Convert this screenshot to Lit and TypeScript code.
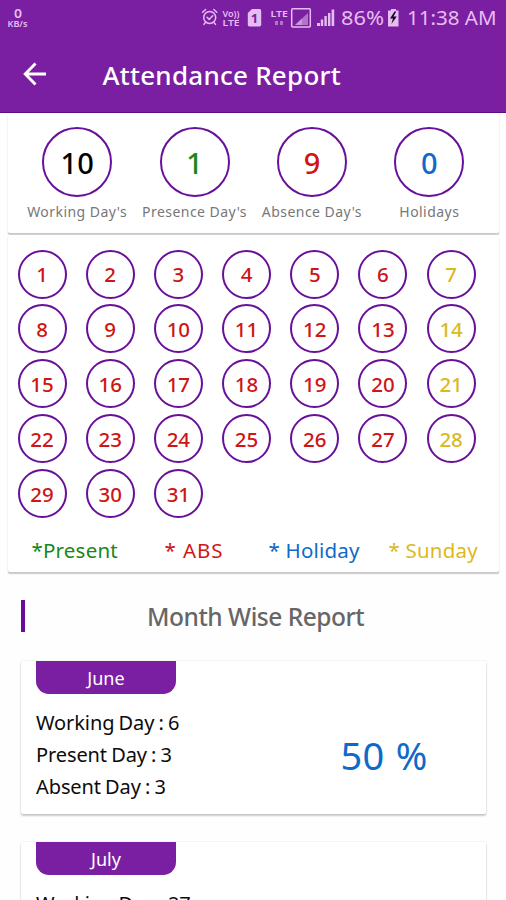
import { LitElement, html, css, svg } from "lit";
import { customElement, property } from "lit/decorators.js";

type DayKind = "present" | "absent" | "holiday" | "sunday";

@customElement("status-bar")
class StatusBar extends LitElement {
  static styles = css`
    :host { display: flex; height: 37px; }
    svg { display: block; width: 100%; height: 37px; }
    text { font-family: "Noto Sans", sans-serif; fill: #e6bdf2; }
    .clock { font-size: 19px; }
    .tiny { font-size: 9px; font-weight: 600; }
    .zero { font-size: 13px; font-weight: 600; }
    .line { fill: none; stroke: #e6bdf2; stroke-width: 1.5; stroke-linecap: round; }
    .fill { fill: #e6bdf2; }
    .dim { fill: #b273c9; }
    .sim { font-size: 13px; font-weight: 700; fill: #7b1fa2; }
    .bolt { fill: #1c0526; }
  `;
  render() {
    return html`<svg viewBox="0 0 506 37">
      ${svg`
      <text class="zero" x="14" y="18" textLength="8" lengthAdjust="spacingAndGlyphs">0</text>
      <text class="tiny" x="7.5" y="26.8" textLength="20" lengthAdjust="spacingAndGlyphs">KB/s</text>
      <circle class="line" cx="209.7" cy="17.4" r="6" />
      <path class="line" d="M207 17.2l2.2 2.2 3.5-3.6M202.6 12.3l3-2.8M216.8 12.3l-3-2.8M205.3 22.6l-1.4 1.8M214.1 22.6l1.4 1.8" />
      <text class="tiny" x="222.5" y="16.5" textLength="17" lengthAdjust="spacingAndGlyphs">Vo))</text>
      <text class="tiny" x="222.5" y="26" textLength="17" lengthAdjust="spacingAndGlyphs">LTE</text>
      <path class="fill" d="M252 9h7.500q1.700 0 1.700 1.700v14q0 1.700-1.700 1.700h-10q-1.700 0-1.700-1.700V13z" />
      <text class="sim" x="250.800" y="22.500">1</text>
      <text class="tiny" x="270.500" y="17.200" textLength="17.500" lengthAdjust="spacingAndGlyphs">LTE</text>
      <path class="dim" d="M275 21h3v4h-3zM280 21h3v4h-3z" />
      <rect class="line" x="291.700" y="8.700" width="18.600" height="18.300" rx="1" />
      <path class="dim" d="M295 25L308 13V25z" />
      <path class="fill" d="M295 25L302 18.600V25z" opacity="0.5" />
      <path class="fill" d="M317 26v-3h3v3zM320.800 26v-6.500h2.400V26zM324.400 26V16h2.400v10zM328 26V13h2.400v13zM331.600 26V9.500h2.600V26z" />
      <text class="clock" x="341" y="24.7" textLength="43" lengthAdjust="spacingAndGlyphs">86%</text>
      <path class="fill" d="M391 10.500V9h5v1.500h2.500v16h-10.500v-16z" />
      <path class="bolt" d="M394.500 11.500l-4.500 7h3l-1.600 5.500 5.400-7.500h-3.300l2.700-5z" />
      <text class="clock" x="407" y="24.7" textLength="89.5" lengthAdjust="spacingAndGlyphs">11:38 AM</text>
      `}
    </svg>`;
  }
}

@customElement("month-card")
class MonthCard extends LitElement {
  @property() month = "";
  @property({ type: Number }) working = 0;
  @property({ type: Number }) presentDays = 0;
  @property({ type: Number }) absentDays = 0;
  @property({ type: Number }) percent = 0;
  static styles = css`
    :host {
      display: flex;
      box-sizing: border-box;
      height: 153px;
      margin: 0 20px 28px 21px;
      padding: 0 15px;
      background: #fff;
      border-radius: 2px;
      box-shadow: 0 2px 2px rgba(0, 0, 0, 0.2), 0 0 2px rgba(0, 0, 0, 0.14);
    }
    .info { width: 261px; }
    .tab {
      width: 140px;
      height: 33px;
      margin-bottom: 13.3px;
      border-radius: 0 0 13px 13px;
      background: #7b1fa2;
      color: #fff;
      font-size: 18px;
      line-height: 34px;
      text-align: center;
    }
    .row {
      font-size: 20px;
      line-height: 31.700px;
      letter-spacing: -0.1px;
      word-spacing: -0.9px;
      color: #0c0c0c;
      white-space: nowrap;
    }
    .percent {
      flex: 1;
      text-align: center;
      color: #0f69c9;
      font-size: 38px;
      letter-spacing: 0.3px;
      word-spacing: 1px;
      line-height: 189px;
    }
  `;
  render() {
    return html`
      <div class="info">
        <div class="tab">${this.month}</div>
        <div class="row">Working Day : ${this.working}</div>
        <div class="row">Present Day : ${this.presentDays}</div>
        <div class="row">Absent Day : ${this.absentDays}</div>
      </div>
      <div class="percent">${this.percent} %</div>
    `;
  }
}

@customElement("app-root")
class AppRoot extends LitElement {
  static styles = css`
    :host {
      display: block;
      height: 900px;
      overflow: hidden;
      background: #fefefe;
      font-family: "Noto Sans", "Open Sans", sans-serif;
    }
    .top { height: 113px; background: #7b1fa2; box-shadow: inset 0 -1px #5e0b86; }
    .bar { display: flex; align-items: center; height: 75px; padding-left: 23px; }
    .back { width: 24px; height: 24px; margin-right: 55.5px; margin-bottom: 2px; }
    .title { color: #fff; font-size: 26px; line-height: 36px; font-weight: 500; letter-spacing: 0.25px; }
    .card {
      margin: 0 7px 0 8px;
      background: #fff;
      border-radius: 2px;
      box-shadow: 0 2px 1.5px -0.5px rgba(0, 0, 0, 0.22);
    }
    .summary { display: flex; height: 120px; box-sizing: border-box; padding: 14px 11px 0 10.500px; }
    .stat { flex: 1; display: flex; flex-direction: column; align-items: center; }
    .ring {
      box-sizing: border-box;
      display: grid;
      place-items: center;
      border: 2px solid #68109a;
      border-radius: 50%;
    }
    .big { width: 70px; height: 70px; font-size: 29px; line-height: 40px; font-weight: 500; padding-top: 1px; }
    .label { font-size: 14px; line-height: 20px; margin-top: 5px; color: #777; letter-spacing: 0.45px; white-space: nowrap; }
    .calendar { height: 337px; margin-top: 2px; padding-top: 14.500px; box-sizing: border-box; }
    .grid { display: grid; grid-template-columns: repeat(7, 68.2px); grid-auto-rows: 54.9px; }
    .day { width: 49px; height: 49px; margin-left: 9.5px; font-size: 20.5px; line-height: 28px; font-weight: 500; }
    .present { color: #15891c; }
    .absent { color: #cf1515; }
    .holiday { color: #0f69c9; }
    .sunday { color: #dcb91c; }
    .neutral { color: #000; }
    .legend {
      display: grid;
      grid-template-columns: 133px 104px 120px 1fr;
      padding: 12.500px 0 0 23.5px;
      font-size: 20.5px;
      line-height: 29px;
      letter-spacing: 0.2px;
      white-space: nowrap;
    }
    .legend .absent { letter-spacing: 0.9px; }
    .heading { display: flex; align-items: center; height: 32px; margin: 28px 0 29px 21px; }
    .mark { width: 4px; height: 32px; background: #6a0c9a; margin-right: 122px; }
    .heading-text {
      color: #666;
      font-size: 24.5px;
      line-height: 34px;
      padding-top: 2px;
      font-weight: 500;
      letter-spacing: -0.48px;
      white-space: nowrap;
    }
  `;

  private stats: { value: number; label: string; tone: string }[] = [
    { value: 10, label: "Working Day's", tone: "neutral" },
    { value: 1, label: "Presence Day's", tone: "present" },
    { value: 9, label: "Absence Day's", tone: "absent" },
    { value: 0, label: "Holidays", tone: "holiday" },
  ];

  private kindOf(day: number): DayKind {
    return day % 7 === 0 ? "sunday" : "absent";
  }

  render() {
    const days = Array.from({ length: 31 }, (_, i) => i + 1);
    return html`
      <header class="top">
        <status-bar></status-bar>
        <div class="bar">
          <svg class="back" viewBox="0 0 24 24" fill="none" stroke="#fff" stroke-width="2.9">
            <path d="M23 12H2.500M12.500 1.500L2.200 12l10.300 10.500" />
          </svg>
          <span class="title">Attendance Report</span>
        </div>
      </header>
      <section class="card summary">
        ${this.stats.map(
          (s) => html`<div class="stat">
            <div class="ring big ${s.tone}">${s.value}</div>
            <div class="label">${s.label}</div>
          </div>`
        )}
      </section>
      <section class="card calendar">
        <div class="grid">
          ${days.map((d) => html`<div class="ring day ${this.kindOf(d)}">${d}</div>`)}
        </div>
        <div class="legend">
          <span class="present">*Present</span>
          <span class="absent">* ABS</span>
          <span class="holiday">* Holiday</span>
          <span class="sunday">* Sunday</span>
        </div>
      </section>
      <div class="heading">
        <div class="mark"></div>
        <div class="heading-text">Month Wise Report</div>
      </div>
      <month-card month="June" .working=${6} .presentDays=${3} .absentDays=${3} .percent=${50}></month-card>
      <month-card month="July" .working=${27} .presentDays=${20} .absentDays=${7} .percent=${74}></month-card>
    `;
  }
}
